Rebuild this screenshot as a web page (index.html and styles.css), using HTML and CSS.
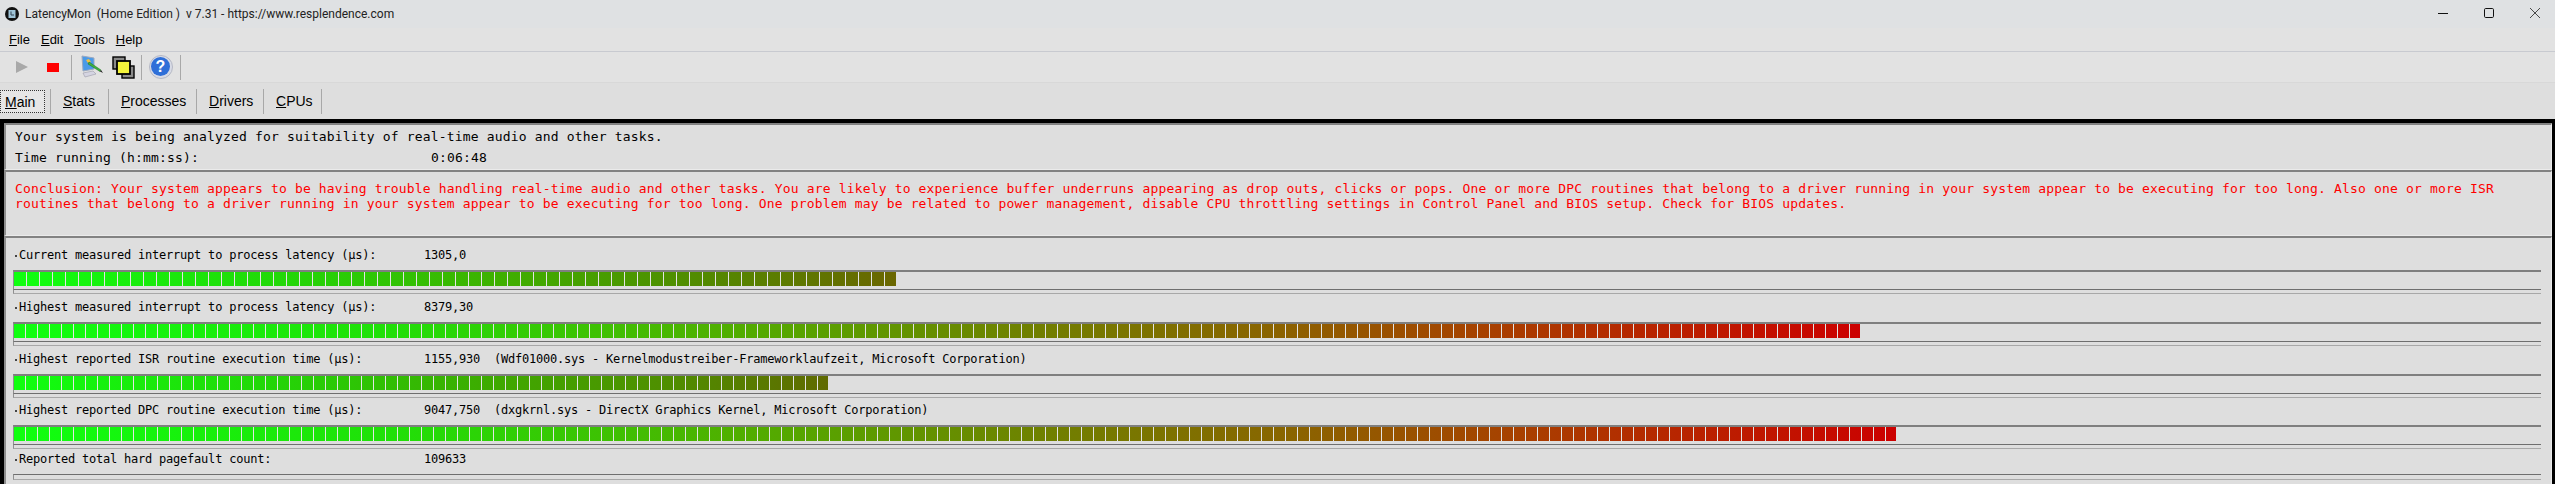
FILE: index.html
```html
<!DOCTYPE html>
<html lang="en">
<head>
    <meta charset="UTF-8">
    <title>LatencyMon</title>
    <link rel="stylesheet" href="styles.css">
</head>
<body>
    <div class="titlebar">
        <svg class="appicon" width="14" height="14" viewBox="0 0 14 14">
            <circle cx="7" cy="7" r="7" fill="#111"/>
            <rect x="3.5" y="3" width="7" height="8" fill="#9fc4d8"/>
            <path d="M6 4.5V8H9" stroke="#345" fill="none"/>
        </svg>
        <span class="apptitle">LatencyMon  (Home Edition )  v 7.31 - https://www.resplendence.com</span>
        <div class="winbtns">
            <svg width="12" height="12" viewBox="0 0 12 12"><path d="M1 6.5H11" stroke="#111" stroke-width="1"/></svg>
            <svg width="12" height="12" viewBox="0 0 12 12"><rect x="1.5" y="1.5" width="9" height="9" rx="1.2" fill="none" stroke="#111"/></svg>
            <svg width="12" height="12" viewBox="0 0 12 12"><path d="M1 1L11 11M11 1L1 11" stroke="#222" stroke-width="0.8"/></svg>
        </div>
    </div>
    <div class="menubar">
        <span class="menu"><u>F</u>ile</span>
        <span class="menu"><u>E</u>dit</span>
        <span class="menu"><u>T</u>ools</span>
        <span class="menu"><u>H</u>elp</span>
    </div>
    <div class="toolbar">
        <svg class="tool play" width="12" height="12" viewBox="0 0 12 12"><path d="M0 0L12 6L0 12Z" fill="#a9a9a9"/></svg>
        <svg class="tool stop" width="12" height="9" viewBox="0 0 12 9"><rect width="12" height="9" fill="#f00"/></svg>
        <span class="sep"></span>
        <svg class="tool monitor" width="24" height="24" viewBox="0 0 24 24">
            <path d="M3 1L15 3V14L4 16Z" fill="#4a9ae8" stroke="#9aa8c0"/>
            <path d="M4 18L14 16L17 19L6 22Z" fill="#d5d5e2" stroke="#9a9aaa" stroke-width=".6"/>
            <path d="M7 5L10 4L12 7L9 8Z" fill="#f0c040"/>
            <path d="M10 7L22 15L21 16.5L9 9Z" fill="#3eb33e" stroke="#1d6a1d" stroke-width=".5"/>
            <path d="M22 15L24 18L21 16.5Z" fill="#222"/>
        </svg>
        <svg class="tool windows" width="23" height="23" viewBox="0 0 23 23">
            <rect x="1" y="1" width="12" height="12" fill="#8a8a8a" stroke="#000" stroke-width="1.4"/>
            <rect x="10" y="10" width="12" height="12" fill="#8a8a8a" stroke="#000" stroke-width="1.4"/>
            <rect x="5" y="5" width="13" height="13" fill="#f5f53c" stroke="#000" stroke-width="1.8"/>
        </svg>
        <span class="sep"></span>
        <svg class="tool help" width="24" height="24" viewBox="0 0 24 24">
            <circle cx="12" cy="12" r="11.5" fill="#d8dbe6" stroke="#b5b8c4"/>
            <circle cx="11.5" cy="11.5" r="9.5" fill="#2f6fd8"/>
            <text x="11.5" y="17" text-anchor="middle" class="helpmark">?</text>
        </svg>
        <span class="sep"></span>
    </div>
    <div class="tabs">
        <span class="tab tab-active"><u>M</u>ain</span>
        <span class="tab tab-stats"><u>S</u>tats</span>
        <span class="tab tab-processes"><u>P</u>rocesses</span>
        <span class="tab tab-drivers"><u>D</u>rivers</span>
        <span class="tab tab-cpus"><u>C</u>PUs</span>
    </div>
    <div class="frame">
        <div class="group group-status">
            <p class="line">Your system is being analyzed for suitability of real-time audio and other tasks.</p>
            <p class="line time"><span class="timelabel">Time running (h:mm:ss):</span><span>0:06:48</span></p>
        </div>
        <div class="group group-conclusion">
            <p class="conclusion">Conclusion: Your system appears to be having trouble handling real-time audio and other tasks. You are likely to experience buffer underruns appearing as drop outs, clicks or pops. One or more DPC routines that belong to a driver running in your system appear to be executing for too long. Also one or more ISR<br>routines that belong to a driver running in your system appear to be executing for too long. One problem may be related to power management, disable CPU throttling settings in Control Panel and BIOS setup. Check for BIOS updates.</p>
        </div>
        <div class="group group-meters">
            <div class="row row-tall">
                <div class="label"><span class="dot"></span><span class="name">Current measured interrupt to process latency (µs):</span><span>1305,0</span></div>
                <div class="meter"><div class="fill fill-current"></div></div>
                <div class="under"></div>
            </div>
            <div class="row row-tall">
                <div class="label"><span class="dot"></span><span class="name">Highest measured interrupt to process latency (µs):</span><span>8379,30</span></div>
                <div class="meter"><div class="fill fill-highest"></div></div>
                <div class="under"></div>
            </div>
            <div class="row">
                <div class="label"><span class="dot"></span><span class="name">Highest reported ISR routine execution time (µs):</span><span>1155,930  (Wdf01000.sys - Kernelmodustreiber-Frameworklaufzeit, Microsoft Corporation)</span></div>
                <div class="meter"><div class="fill fill-isr"></div></div>
                <div class="under"></div>
            </div>
            <div class="row row-short">
                <div class="label"><span class="dot"></span><span class="name">Highest reported DPC routine execution time (µs):</span><span>9047,750  (dxgkrnl.sys - DirectX Graphics Kernel, Microsoft Corporation)</span></div>
                <div class="meter"><div class="fill fill-dpc"></div></div>
                <div class="under"></div>
            </div>
            <div class="row">
                <div class="label"><span class="dot"></span><span class="name">Reported total hard pagefault count:</span><span>109633</span></div>
                <div class="under under-tall"></div>
            </div>
        </div>
    </div>
</body>
</html>
```

FILE: styles.css
```css
*{
    margin:0;
    padding:0;
    box-sizing:border-box;
}
html,body{
    height:484px;
    overflow:hidden;
}
body{
    background-color:#dedede;
    font-family:"Liberation Sans",sans-serif;
    color:#000;
}

/* window chrome */
.titlebar{
    height:28px;
    background-color:#dfe1e3;
    display:flex;
    align-items:center;
    padding-left:5px;
}
.apptitle{
    margin-left:6px;
    font-family:Roboto,sans-serif;
    font-size:12px;
    color:#222;
    white-space:pre;
}
.winbtns{
    margin-left:auto;
    display:flex;
    gap:34px;
    padding-right:14px;
    padding-bottom:2px;
}

.menubar{
    height:24px;
    background-color:#e2e2e2;
    border-bottom:1px solid #c8cad0;
    display:flex;
    align-items:center;
    gap:11px;
    padding-left:9px;
    font-size:13px;
}
.toolbar{
    height:31px;
    background-color:#e2e2e2;
    border-bottom:1px solid #d8d8d8;
    display:flex;
    align-items:center;
}
.tool{
    flex:none;
}
.play{
    margin-left:16px;
}
.stop{
    margin-left:19px;
    margin-right:12px;
}
.monitor{
    margin-left:7px;
}
.windows{
    margin-left:9px;
    margin-right:6px;
}
.help{
    margin-left:7px;
    margin-right:7px;
}
.helpmark{
    font-family:"Liberation Sans",sans-serif;
    font-size:16px;
    font-weight:bold;
    fill:#fff;
}
.sep{
    width:1px;
    height:25px;
    background-color:#a8a8a8;
    flex:none;
}

.tabs{
    height:36px;
    background-color:#dedede;
    display:flex;
    align-items:center;
    font-size:14px;
}
.tab{
    height:25px;
    line-height:24px;
    border-right:1px solid #a8a8a8;
    padding-left:12px;
}
.tab-active{
    width:45px;
    height:23px;
    line-height:22px;
    padding-left:4px;
    border:1px dotted #333;
    background-color:#e6e6e6;
    margin-right:5px;
}
.tab-stats{
    width:59px;
    border-left:1px solid #a8a8a8;
}
.tab-processes{
    width:88px;
}
.tab-drivers{
    width:67px;
}
.tab-cpus{
    width:58px;
}

/* main panel */
.frame{
    border:solid #000;
    border-width:4px 3px 0 4px;
    height:365px;
}
.group{
    border-top:2px solid #828282;
    border-left:2px solid #8e8e8e;
    border-right:1px solid #ebebeb;
    border-bottom:1px solid #ebebeb;
    padding-left:9px;
    font-family:"DejaVu Sans Mono",monospace;
    font-size:13px;
    letter-spacing:.17px;
}
.group-status{
    height:47px;
    padding-top:1px;
}
.line{
    height:21px;
    line-height:21px;
    white-space:pre;
}
.time{
    display:flex;
}
.timelabel{
    width:416px;
}
.group-conclusion{
    height:66px;
    padding-top:9px;
}
.conclusion{
    color:#f00;
    line-height:15px;
    white-space:pre;
}
.group-meters{
    height:248px;
    padding-top:8px;
    padding-left:7px;
    padding-right:10px;
    border-bottom:0;
    font-size:12px;
    letter-spacing:-.22px;
}
.row{
    height:51px;
}
.row-tall{
    height:52px;
}
.row-short{
    height:49px;
}
.label{
    height:24px;
    line-height:18px;
    display:flex;
    align-items:flex-start;
    white-space:pre;
}
.dot{
    width:2px;
    height:2px;
    margin:9px 2px 0 2px;
    background-color:#444;
    flex:none;
}
.name{
    width:405px;
    flex:none;
}
.meter{
    height:19px;
    border-top:2px solid #7f7f7f;
    border-left:1px solid #8f8f8f;
}
.fill{
    height:14px;
}
.under{
    height:5px;
    border:solid #a8a8a8;
    border-width:1px 0 1px 1px;
    border-top-color:#6f6f6f;
    border-left-color:#8f8f8f;
}
.under-tall{
    height:6px;
}

/* segmented bars, gaps are painted over the gradient */
.fill-current{
    width:882px;
    background:
        repeating-linear-gradient(90deg,transparent 0 12px,#e4e4e4 12px 13px),
        linear-gradient(90deg,#10ff10 0%,#22d808 30%,#3fb000 55%,#4f8f00 75%,#6a6600 100%);
}
.fill-highest{
    width:1846px;
    background:
        repeating-linear-gradient(90deg,transparent 0 11px,#e4e4e4 11px 12px),
        linear-gradient(90deg,#10ff10 0%,#20e008 20%,#4fb000 38%,#708000 55%,#8a6400 68%,#a84000 80%,#cc0000 100%);
}
.fill-isr{
    width:814px;
    background:
        repeating-linear-gradient(90deg,transparent 0 11px,#e4e4e4 11px 12px),
        linear-gradient(90deg,#10ff10 0%,#22d808 30%,#3fa800 60%,#4f8f00 80%,#606a00 100%);
}
.fill-dpc{
    width:1882px;
    background:
        repeating-linear-gradient(90deg,transparent 0 11px,#e4e4e4 11px 12px),
        linear-gradient(90deg,#10ff10 0%,#20e008 20%,#4fb000 38%,#708000 55%,#8a6400 68%,#a84000 80%,#cc0000 100%);
}
```
